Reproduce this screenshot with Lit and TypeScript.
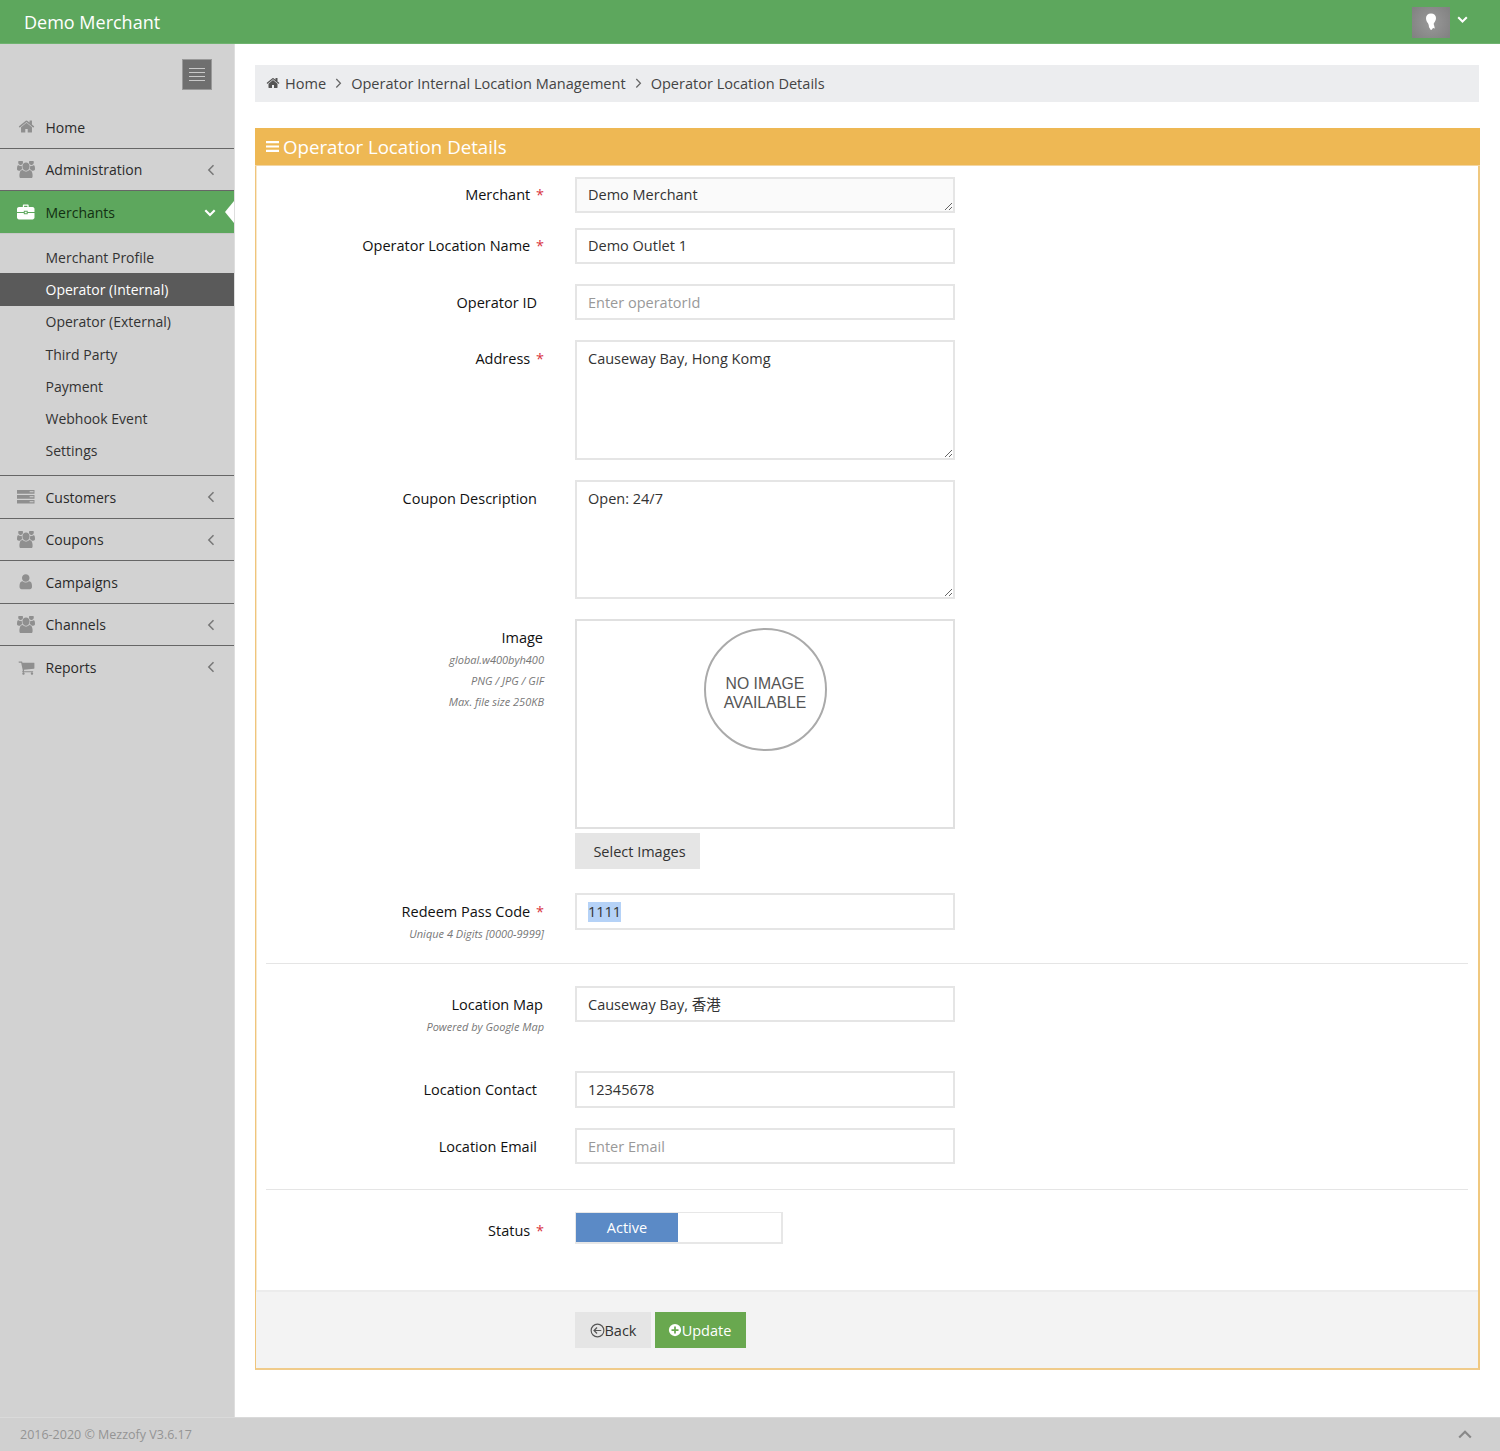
import { LitElement, html, css, svg } from "lit";
import { customElement } from "lit/decorators.js";

const HOME = svg`<svg viewBox="0 0 1792 1792"><path d="M1472 992v480q0 26-19 45t-45 19h-384v-384h-256v384h-384q-26 0-45-19t-19-45v-480q0-1 .5-3t.5-3l575-474 575 474q1 2 1 6zm223-69l-62 74q-8 9-21 11h-3q-13 0-21-7l-692-577-692 577q-12 8-24 7-13-2-21-11l-62-74q-8-10-7-23.5t11-21.5l719-599q32-26 76-26t76 26l244 204v-195q0-14 9-23t23-9h192q14 0 23 9t9 23v408l219 182q10 8 11 21.5t-7 23.5z"/></svg>`;
const USERS = svg`<svg class="u" viewBox="0 128 1920 1536" preserveAspectRatio="none"><path d="M593 896q-162 5-265 128h-134q-82 0-138-40.5t-56-118.5q0-353 124-353 6 0 43.5 21t97.5 42.5 119 21.5q67 0 133-23-5 37-5 66 0 139 81 256zm1071 637q0 120-73 189.500t-194 69.500h-874q-121 0-194-69.500t-73-189.500q0-53 3.500-103.500t14-109 26.500-108.500 43-97.500 62-81 85.500-53.500 111.500-20q10 0 43 21.500t73 48 107 48 135 21.500 135-21.500 107-48 73-48 43-21.500q61 0 111.500 20t85.500 53.500 62 81 43 97.500 26.500 108.500 14 109 3.500 103.500zm-1024-1277q0 106-75 181t-181 75-181-75-75-181 75-181 181-75 181 75 75 181zm704 384q0 159-112.500 271.500t-271.500 112.500-271.500-112.500-112.500-271.500 112.500-271.500 271.500-112.500 271.500 112.500 112.500 271.500zm576 225q0 78-56 118.500t-138 40.500h-134q-103-123-265-128 81-117 81-256 0-29-5-66 66 23 133 23 59 0 119-21.500t97.500-42.500 43.500-21q124 0 124 353zm-128-609q0 106-75 181t-181 75-181-75-75-181 75-181 181-75 181 75 75 181z"/></svg>`;
const USER = svg`<svg viewBox="0 0 1792 1792"><path d="M1536 1399q0 109-62.500 187t-150.500 78h-854q-88 0-150.500-78t-62.500-187q0-85 8.500-160.500t31.500-152 58.500-131 94-89 134.500-34.500q131 128 313 128t313-128q76 0 134.500 34.500t94 89 58.500 131 31.500 152 8.500 160.500zm-256-887q0 159-112.500 271.500t-271.500 112.500-271.500-112.500-112.500-271.500 112.500-271.500 271.500-112.500 271.500 112.500 112.500 271.500z"/></svg>`;
const CART = svg`<svg viewBox="0 0 1792 1792"><path d="M704 1536q0 52-38 90t-90 38-90-38-38-90 38-90 90-38 90 38 38 90zm896 0q0 52-38 90t-90 38-90-38-38-90 38-90 90-38 90 38 38 90zm128-1088v512q0 24-16.500 42.500t-40.500 21.500l-1044 122q13 60 13 70 0 16-24 64h920q26 0 45 19t19 45-19 45-45 19h-1024q-26 0-45-19t-19-45q0-11 8-31.500t16-36 21.500-40 15.500-29.500l-177-823h-204q-26 0-45-19t-19-45 19-45 45-19h256q16 0 28.500 6.500t19.500 15.500 13 24.500 8 26 5.500 29.500 4.500 26h1201q26 0 45 19t19 45z"/></svg>`;
const BRIEF = svg`<svg viewBox="0 0 18 16"><path d="M6 3V1.600C6 .9 6.500.5 7 .5h4c.6 0 1 .4 1 1.100V3h-1.300V1.800H7.300V3zM2 3h14c1 0 2 .8 2 2v3.200H11V7H7v1.200H0V5c0-1.200 1-2 2-2zM0 9.200h7v1.300h4V9.200h7V14c0 1.100-1 2-2 2H2c-1 0-2-.9-2-2zM8 8h2v1.500H8z"/></svg>`;
const SERVER = svg`<svg viewBox="0 0 18 14"><path fill-rule="evenodd" d="M0 0h18v3.800H0zm13 1.400v1h4v-1zM0 5.100h18v3.800H0zm13 1.400v1h4v-1zM0 10.200h18V14H0zm13 1.400v1h4v-1z"/></svg>`;
const BARS = svg`<svg viewBox="0 0 13 11"><path d="M0 0h13v2.200H0zM0 4.400h13v2.200H0zM0 8.800h13V11H0z"/></svg>`;
const LEFT = svg`<svg viewBox="0 0 8 12"><path d="M6.500 1.200 1.800 6l4.700 4.800" fill="none" stroke="currentColor" stroke-width="1.500"/></svg>`;
const DOWN = svg`<svg viewBox="0 0 12 8"><path d="M1.300 1.300 6 6l4.700-4.700" fill="none" stroke="currentColor" stroke-width="2.200"/></svg>`;
const RIGHT = svg`<svg viewBox="0 0 8 12"><path d="M1.500 1.200 6.200 6l-4.700 4.800" fill="none" stroke="currentColor" stroke-width="1.400"/></svg>`;
const UP = svg`<svg viewBox="0 0 14 9"><path d="M1.200 7.500 7 1.800l5.800 5.700" fill="none" stroke="currentColor" stroke-width="2.200"/></svg>`;
const BACK = svg`<svg viewBox="0 0 16 16"><circle cx="8" cy="8" r="6.800" fill="none" stroke="currentColor" stroke-width="1.200"/><path d="M12 8H4.500M7.500 4.800 4.300 8l3.200 3.200" fill="none" stroke="currentColor" stroke-width="1.300"/></svg>`;
const PLUS = svg`<svg viewBox="0 0 16 16"><path fill-rule="evenodd" d="M8 1a7 7 0 1 1 0 14A7 7 0 0 1 8 1zM7 4v3H4v2h3v3h2V9h3V7H9V4z"/></svg>`;
const BUST = svg`<svg viewBox="0 0 12 18"><path d="M6 .5c3 0 5 1.800 5 4.500 0 2.200-1 3.800-2 5-.4.800-.3 1.300 0 2 .3 1 .5 2 .8 3.500-.8 0-1.500-.8-2-.2-.5.600-.8 1.700-1.800 1.700-.6 0-.6-1-1.100-1.500-.4-.5-.8-.8-.9-1.500 0-1.300-.4-2.600-1.100-3.900C1.900 9 1 7.200 1 5 1 2.300 3 .5 6 .5z"/></svg>`;

interface NavItem { label: string; icon: unknown; wide?: boolean; chevron?: boolean; }

const TOP: NavItem[] = [
  { label: "Home", icon: HOME },
  { label: "Administration", icon: USERS, wide: true, chevron: true },
];
const BOTTOM: NavItem[] = [
  { label: "Customers", icon: SERVER, wide: true, chevron: true },
  { label: "Coupons", icon: USERS, wide: true, chevron: true },
  { label: "Campaigns", icon: USER, wide: true },
  { label: "Channels", icon: USERS, wide: true, chevron: true },
  { label: "Reports", icon: CART, chevron: true },
];
const SUB = ["Merchant Profile", "Operator (Internal)", "Operator (External)", "Third Party", "Payment", "Webhook Event", "Settings"];

@customElement("app-root")
export class AppRoot extends LitElement {
  static styles = css`
    :host {
      display: grid;
      grid-template-rows: 44px 1fr 34px;
      height: 100vh;
      min-height: 1451px;
      font-family: "Open Sans", "Noto Sans CJK TC", sans-serif;
      font-size: 14px;
      color: #222;
      background: #fff;
    }
    svg { display: block; fill: currentColor; }
    .top {
      background: #5da75d;
      border-bottom: 1px solid #6fb36f;
      box-sizing: border-box;
      display: flex;
      align-items: center;
      color: #fff;
      padding-left: 24px;
      font-size: 18px;
    }
    .top .brand { flex: 1; }
    .avatar {
      width: 38px; height: 31px;
      margin: 0 0 -1px 0;
      background: radial-gradient(circle at 50% 50%, #999, #808080);
      display: flex; align-items: center; justify-content: center;
    }
    .avatar svg { width: 12px; height: 18px; }
    .caret { width: 11px; height: 8px; margin: -4px 32px 0 7px; }
    .body { display: flex; min-height: 0; }
    .side {
      width: 235px; flex: none; background: #d2d2d2;
      border-right: 1px solid #dedede; box-sizing: border-box;
    }
    .tog-wrap { display: flex; justify-content: flex-end; padding: 15px 22px 16px 0; }
    .tog {
      width: 30px; height: 31px; box-sizing: border-box;
      background: #6f6f6f; border: 1px solid #999;
      display: flex; flex-direction: column; justify-content: center; gap: 3px;
      align-items: center;
    }
    .tog i { display: block; width: 16px; height: 1px; background: #c9c9c9; }
    .nav {
      height: 42.5px; box-sizing: border-box;
      display: flex; align-items: center;
      padding: 1px 0 0 45.5px; position: relative;
      border-bottom: 1px solid #666;
      color: #2a2a2a;
    }
    .nav.last { border-bottom: 0; }
    .nav .ic {
      position: absolute; left: 17px; top: 50%; transform: translateY(-50%);
      color: #8f8f8f; width: 18px; height: 18px;
      display: flex; align-items: center; justify-content: center;
    }
    .nav .ic svg { width: 17.500px; height: auto; }
    .nav .ic svg.u { width: 18px; height: 16.500px; }
    .nav .ic.narrow svg { width: 17px; }
    .nav .chev { position: absolute; right: 19px; top: 15px; width: 8px; height: 12px; color: #777; }
    .nav.active { background: #5da75d; border-bottom: 1px solid #c7c7c7; height: 43px; color: #123012; }
    .nav.active .ic { color: #fff; }
    .nav.active .chev { right: 18px; top: 18px; width: 12px; height: 8px; color: #fff; }
    .notch {
      position: absolute; right: 0; top: 50%; margin-top: -11px;
      width: 0; height: 0;
      border-top: 11px solid transparent; border-bottom: 11px solid transparent;
      border-right: 9px solid #fff;
    }
    .subs { padding: 7px 0 8px; border-bottom: 1px solid #666; }
    .sub { height: 32.3px; display: flex; align-items: center; padding-left: 45.5px; color: #333; }
    .sub.on { background: #5a5a5a; color: #fff; }
    .main { flex: 1; min-width: 0; padding: 21px 20px 0; font-size: 14.500px; }
    .crumb {
      height: 37px; box-sizing: border-box; background: #ecedef; display: flex; align-items: center;
      padding: 0 0 1px 11px; color: #444; margin: 0 1px 26px 0; font-size: 14.550px;
    }
    .crumb .home { width: 14px; height: 14px; margin-right: 5px; color: #555; }
    .crumb .sep { width: 7px; height: 10px; margin: 0 9px 0 9px; color: #666; }
    .panel {
      border-right: 2px solid #f0c87f; border-bottom: 2px solid #f0cb8a;
      border-left: 1px solid #efc57c; box-shadow: inset 1px 0 #f9e8cc;
    }
    .phead {
      background: #eeb854; height: 38px; margin-left: -1px; margin-right: -2px;
      display: flex; align-items: center; color: #fff; padding-left: 11px;
      font-size: 18.700px; font-weight: 500; border-bottom: 1px solid #f3d6a3; box-sizing: border-box;
    }
    .phead svg { width: 13px; height: 11px; margin-right: 4px; }
    .form { padding-top: 11px; }
    .row { display: flex; align-items: flex-start; }
    .g15 { margin-top: 15px; }
    .g20 { margin-top: 20px; }
    .g24 { margin-top: 24px; }
    .g35 { margin-top: 35px; }
    .label {
      width: 287px; flex: none; margin: 0 32px -1px 0; text-align: right;
      color: #111; line-height: 36px; padding: 1px 6px 0 0; box-sizing: border-box;
    }
    .label.t0 { padding-top: 0; margin-bottom: 0; }
    .label.flush { padding-right: 0; }
    .label .star { color: #d9333f; margin: 0 -1px 0 2px; display: inline-block; width: 8px; text-align: right; }
    .label.req { padding-right: 0; }
    .hint { font-size: 11px; font-style: italic; color: #777; line-height: 21px; margin-right: -1px; }
    .hint.first { margin-top: -7px; }
    .ctl {
      width: 380px; box-sizing: border-box; border: 2px solid #e5e5e5;
      background: #fff; font: inherit; font-size: 14.500px; color: #333;
      padding: 0 11px; height: 36px; outline: none; display: block;
      border-radius: 0; margin: 0;
    }
    .ctl.up { padding-bottom: 2px; }
    .ctl.h37 { height: 37px; }
    .ctl::placeholder { color: #999; opacity: 1; }
    textarea.ctl { padding-top: 7px; line-height: 20px; resize: vertical; }
    textarea.ro { background: #fafafa; height: 36px; overflow: hidden; padding-top: 6px; }
    textarea.a { height: 120px; }
    textarea.b { height: 119px; }
    .tall { height: 37px; display: flex; align-items: center; }
    .tall span { background: #b5d2f7; line-height: 20px; }
    .imgbox {
      width: 380px; height: 210px; box-sizing: border-box; border: 2px solid #e0e0e0;
      padding-top: 7px; display: flex; justify-content: center; align-items: flex-start;
    }
    .noimg {
      width: 123px; height: 123px; box-sizing: border-box; border-radius: 50%;
      border: 2px solid #aaa; display: flex; align-items: center; justify-content: center;
      text-align: center; font-family: "Liberation Sans", Arial, sans-serif; font-size: 15.750px;
      line-height: 19px; color: #555; padding-top: 7px;
    }
    .btn {
      display: inline-flex; align-items: center; justify-content: center; box-sizing: border-box;
      height: 36px; background: #e5e5e5; color: #333; font: inherit; border: 0; padding: 0;
    }
    .select { width: 125px; margin-top: 4px; padding-left: 4px; }
    .hr { height: 1px; background: #e5e5e5; margin: 0 10px 0 10px; }
    .hr.h1 { margin-top: 20px; margin-bottom: 22px; }
    .hr.h2 { margin-top: 25px; margin-bottom: 22px; }
    .toggle {
      width: 208px; height: 32px; box-sizing: border-box; border: 2px solid #e7e7e7; border-left-width: 1px; border-top-width: 1px;
      background: #fff;
    }
    .toggle div {
      width: 102px; height: 100%; background: #5b8ac6; color: #fff;
      display: flex; align-items: center; justify-content: center;
    }
    .pfoot {
      margin-top: 42px; height: 78px; box-sizing: border-box; background: #f3f3f3;
      border-top: 2px solid #ececec; padding: 20px 0 0 319px; display: flex; gap: 4px;
    }
    .back { width: 76px; }
    .back svg { width: 15px; height: 15px; color: #555; }
    .upd { width: 91px; background: #69a84f; color: #fff; padding-right: 2px; }
    .upd svg { width: 14px; height: 14px; }
    .foot {
      background: #d0d0d0; border-top: 1px solid #dadada; box-sizing: border-box; display: flex; align-items: center;
      justify-content: space-between; padding: 0 28px 0 20px; color: #949494; font-size: 12.500px;
    }
    .foot svg { width: 14px; height: 9px; color: #888; }
  `;

  private navRow(n: NavItem, last = false) {
    return html`<div class="nav ${last ? "last" : ""}">
      <span class="ic ${n.wide ? "" : "narrow"}">${n.icon}</span>${n.label}
      ${n.chevron ? html`<span class="chev">${LEFT}</span>` : ""}
    </div>`;
  }

  render() {
    return html`
      <div class="top">
        <div class="brand">Demo Merchant</div>
        <div class="avatar">${BUST}</div>
        <div class="caret">${DOWN}</div>
      </div>
      <div class="body">
        <aside class="side">
          <div class="tog-wrap"><div class="tog"><i></i><i></i><i></i><i></i></div></div>
          ${TOP.map((n) => this.navRow(n))}
          <div class="nav active">
            <span class="ic">${BRIEF}</span>Merchants
            <span class="chev">${DOWN}</span><span class="notch"></span>
          </div>
          <div class="subs">
            ${SUB.map((s, i) => html`<div class="sub ${i === 1 ? "on" : ""}">${s}</div>`)}
          </div>
          ${BOTTOM.map((n, i) => this.navRow(n, i === BOTTOM.length - 1))}
        </aside>
        <main class="main">
          <div class="crumb">
            <span class="home">${HOME}</span>Home
            <span class="sep">${RIGHT}</span>Operator Internal Location Management
            <span class="sep">${RIGHT}</span>Operator Location Details
          </div>
          <section class="panel">
            <div class="phead">${BARS}Operator Location Details</div>
            <div class="form">
              <div class="row">
                <div class="label req t0">Merchant <span class="star">*</span></div>
                <textarea class="ctl ro" readonly>Demo Merchant</textarea>
              </div>
              <div class="row g15">
                <div class="label req t0">Operator Location Name <span class="star">*</span></div>
                <input class="ctl up" .value=${"Demo Outlet 1"} />
              </div>
              <div class="row g20">
                <div class="label">Operator ID</div>
                <input class="ctl" placeholder="Enter operatorId" />
              </div>
              <div class="row g20">
                <div class="label req">Address <span class="star">*</span></div>
                <textarea class="ctl a">Causeway Bay, Hong Komg</textarea>
              </div>
              <div class="row g20">
                <div class="label">Coupon Description</div>
                <textarea class="ctl b">Open: 24/7</textarea>
              </div>
              <div class="row g20">
                <div class="label flush">
                  Image
                  <div class="hint first">global.w400byh400</div>
                  <div class="hint">PNG / JPG / GIF</div>
                  <div class="hint">Max. file size 250KB</div>
                </div>
                <div>
                  <div class="imgbox"><div class="noimg">NO IMAGE<br />AVAILABLE</div></div>
                  <button class="btn select">Select Images</button>
                </div>
              </div>
              <div class="row g24">
                <div class="label req">
                  Redeem Pass Code <span class="star">*</span>
                  <div class="hint first">Unique 4 Digits [0000-9999]</div>
                </div>
                <div class="ctl tall"><span>1111</span></div>
              </div>
              <div class="hr h1"></div>
              <div class="row">
                <div class="label flush">
                  Location Map
                  <div class="hint first">Powered by Google Map</div>
                </div>
                <input class="ctl up" .value=${"Causeway Bay, 香港"} />
              </div>
              <div class="row g35">
                <div class="label">Location Contact</div>
                <input class="ctl h37" .value=${"12345678"} />
              </div>
              <div class="row g20">
                <div class="label">Location Email</div>
                <input class="ctl" placeholder="Enter Email" />
              </div>
              <div class="hr h2"></div>
              <div class="row">
                <div class="label req">Status <span class="star">*</span></div>
                <div class="toggle"><div>Active</div></div>
              </div>
            </div>
            <div class="pfoot">
              <button class="btn back">${BACK}Back</button>
              <button class="btn upd">${PLUS}Update</button>
            </div>
          </section>
        </main>
      </div>
      <footer class="foot">
        <span>2016-2020 © Mezzofy V3.6.17</span>
        ${UP}
      </footer>
    `;
  }
}
